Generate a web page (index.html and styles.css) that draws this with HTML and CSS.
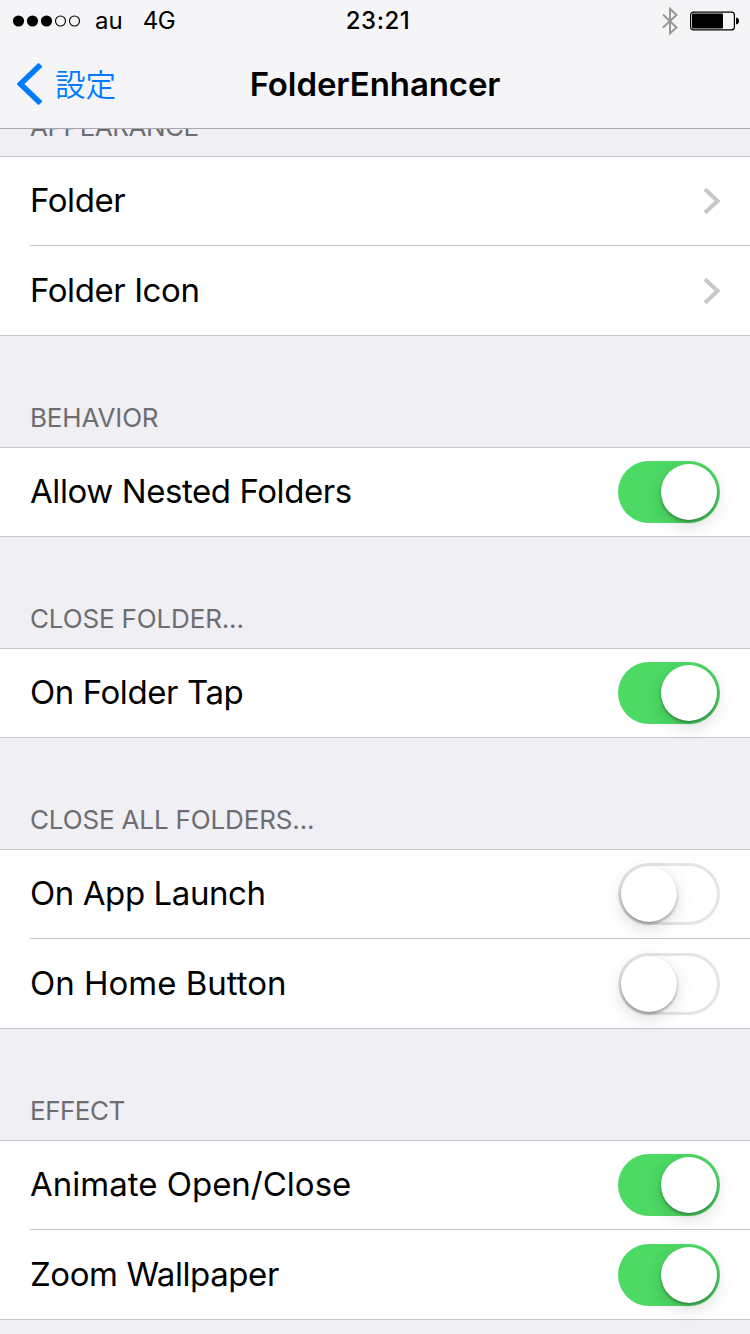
FILE: index.html
```html
<!DOCTYPE html>
<html lang="ja">
<head>
    <meta charset="UTF-8">
    <meta name="viewport" content="width=device-width, initial-scale=1.0">
    <title>FolderEnhancer</title>
    <link rel="stylesheet" href="styles.css">
</head>
<body>

    <header class="top-bar">
        <div class="status-bar">
            <div class="status-left">
                <svg class="signal" width="70" height="12" viewBox="0 0 70 12">
                    <circle cx="6.5" cy="6" r="5.6"/>
                    <circle cx="20.5" cy="6" r="5.6"/>
                    <circle cx="34.5" cy="6" r="5.6"/>
                    <circle class="empty" cx="48.5" cy="6" r="5"/>
                    <circle class="empty" cx="62.5" cy="6" r="5"/>
                </svg>
                <span class="carrier">au</span>
                <span class="network">4G</span>
            </div>
            <span class="clock">23:21</span>
            <div class="status-right">
                <svg width="16" height="28" viewBox="0 0 16 28">
                    <path class="bluetooth" d="M1 7.5 14.5 20.5 8 26.3V1.7L14.5 8 1 20.5"/>
                </svg>
                <svg width="50" height="20" viewBox="0 0 50 20">
                    <rect class="battery" x="0.6" y="1.1" width="43.8" height="17.8" rx="3"/>
                    <rect x="2" y="2.500" width="31" height="15" rx="1"/>
                    <path d="M46 6.500c2 .3 3 1.500 3 3.500s-1 3.200-3 3.500z"/>
                </svg>
            </div>
        </div>
        <nav class="nav-bar">
            <a class="back" href="#">
                <svg width="26" height="42" viewBox="0 0 26 42">
                    <path d="M23.500 1.800 3.500 21 23.500 40.200"/>
                </svg>
                <span class="back-label">設定</span>
            </a>
            <h1 class="title">FolderEnhancer</h1>
        </nav>
    </header>

    <main class="settings">
        <section>
            <h2 class="group-title tight">APPEARANCE</h2>
            <ul class="group">
                <li>
                    <span class="label">Folder</span>
                    <svg class="arrow" width="17" height="28" viewBox="0 0 17 28"><path d="M2 2.200 14.500 14 2 25.800"/></svg>
                </li>
                <li>
                    <span class="label">Folder Icon</span>
                    <svg class="arrow" width="17" height="28" viewBox="0 0 17 28"><path d="M2 2.200 14.500 14 2 25.800"/></svg>
                </li>
            </ul>
        </section>

        <section>
            <h2 class="group-title">BEHAVIOR</h2>
            <ul class="group">
                <li><span class="label">Allow Nested Folders</span><span class="switch on"></span></li>
            </ul>
        </section>

        <section>
            <h2 class="group-title">CLOSE FOLDER...</h2>
            <ul class="group">
                <li><span class="label">On Folder Tap</span><span class="switch on"></span></li>
            </ul>
        </section>

        <section>
            <h2 class="group-title">CLOSE ALL FOLDERS...</h2>
            <ul class="group">
                <li><span class="label">On App Launch</span><span class="switch"></span></li>
                <li><span class="label wide">On Home Button</span><span class="switch"></span></li>
            </ul>
        </section>

        <section>
            <h2 class="group-title tight">EFFECT</h2>
            <ul class="group">
                <li><span class="label wide">Animate Open/Close</span><span class="switch on"></span></li>
                <li><span class="label">Zoom Wallpaper</span><span class="switch on"></span></li>
            </ul>
        </section>
    </main>

</body>
</html>
```
FILE: styles.css
```css
* {
    box-sizing: border-box;
}

body {
    margin: 0;
    height: 1334px;
    overflow: hidden;
    background-color: #efeff4;
    font-family: Inter, "Noto Sans CJK JP", sans-serif;
    color: #000;
}

h1, h2, ul {
    margin: 0;
    padding: 0;
}

.top-bar {
    position: relative;
    z-index: 1;
    height: 129px;
    background-color: #f5f5f7;
    border-bottom: 1px solid #a7a7ab;
}

.status-bar {
    display: grid;
    grid-template-columns: 1fr auto 1fr;
    align-items: center;
    height: 40px;
    padding: 1px 10px 0 12px;
    font-size: 24px;
    line-height: 40px;
}

.status-left,
.status-right {
    display: flex;
    align-items: center;
}

.status-right {
    justify-content: flex-end;
    gap: 12px;
}

.signal .empty {
    fill: none;
    stroke: #000;
    stroke-width: 1.1;
}

.carrier {
    margin-left: 13px;
}

.network {
    margin-left: 20px;
    letter-spacing: -0.5px;
}

.clock {
    font-weight: 500;
    letter-spacing: 0.5px;
    margin-left: 4px;
}

.bluetooth {
    fill: none;
    stroke: #999;
    stroke-width: 2;
}

.battery {
    fill: none;
    stroke: #000;
    stroke-width: 1.2;
}

.nav-bar {
    display: grid;
    grid-template-columns: 1fr auto 1fr;
    align-items: center;
    height: 88px;
    padding: 0 17px;
}

.back {
    display: flex;
    align-items: center;
    gap: 12px;
    color: #007aff;
    text-decoration: none;
}

.back path {
    fill: none;
    stroke: #007aff;
    stroke-width: 5.6;
}

.back-label {
    padding-bottom: 3px;
    font-family: "Noto Sans CJK JP", sans-serif;
    font-size: 30.5px;
    font-weight: 350;
    line-height: 44px;
}

.title {
    padding-bottom: 1px;
    font-size: 33px;
    font-weight: 600;
    letter-spacing: -0.1px;
}

.settings {
    margin-top: -84px;
}

.group-title {
    height: 111px;
    padding: 66px 0 0 30px;
    font-size: 26px;
    font-weight: 400;
    line-height: 32px;
    letter-spacing: -0.15px;
    color: #6d6d72;
}

.group-title.tight {
    letter-spacing: -0.5px;
}

.group {
    list-style: none;
    background-color: #fff;
    border-top: 1px solid #c8c7cc;
    border-bottom: 1px solid #c8c7cc;
}

.group li {
    display: flex;
    align-items: center;
    justify-content: space-between;
    height: 88px;
    padding-right: 30px;
    margin-left: 30px;
    font-size: 33px;
}

.group li + li {
    height: 90px;
    padding-top: 1px;
    border-top: 1px solid #c8c7cc;
}

.label {
    padding-bottom: 2px;
    letter-spacing: -0.42px;
}

.label.wide {
    letter-spacing: 0;
}

.arrow path {
    fill: none;
    stroke: #c7c7cc;
    stroke-width: 4;
}

.switch {
    width: 102px;
    height: 62px;
    padding: 3px;
    border-radius: 31px;
    background-color: #fff;
    box-shadow: inset 0 0 0 3px #e5e5e5;
}

.switch::before {
    content: "";
    display: block;
    width: 56px;
    height: 56px;
    border-radius: 50%;
    background-color: #fff;
    box-shadow: 0 6px 18px rgba(0, 0, 0, 0.14), 0 2px 3px rgba(0, 0, 0, 0.32);
}

.switch.on {
    background-color: #4cd964;
    box-shadow: none;
}

.switch.on::before {
    margin-left: 40px;
}
```
